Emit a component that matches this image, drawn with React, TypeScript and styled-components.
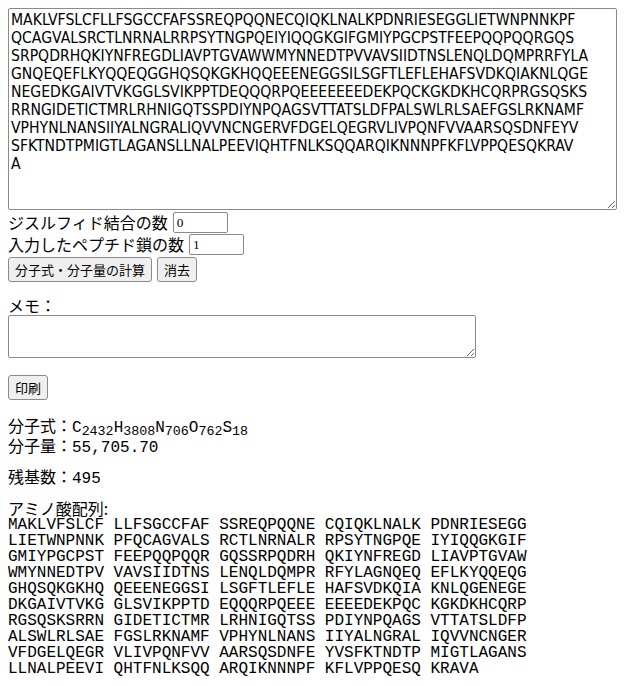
import styled, { createGlobalStyle } from "styled-components";

// textarea lines as shown in the screenshot
const SEQ_LINES = [
  "MAKLVFSLCFLLFSGCCFAFSSREQPQQNECQIQKLNALKPDNRIESEGGLIETWNPNNKPF",
  "QCAGVALSRCTLNRNALRRPSYTNGPQEIYIQQGKGIFGMIYPGCPSTFEEPQQPQQRGQS",
  "SRPQDRHQKIYNFREGDLIAVPTGVAWWMYNNEDTPVVAVSIIDTNSLENQLDQMPRRFYLA",
  "GNQEQEFLKYQQEQGGHQSQKGKHQQEEENEGGSILSGFTLEFLEHAFSVDKQIAKNLQGE",
  "NEGEDKGAIVTVKGGLSVIKPPTDEQQQRPQEEEEEEEDEKPQCKGKDKHCQRPRGSQSKS",
  "RRNGIDETICTMRLRHNIGQTSSPDIYNPQAGSVTTATSLDFPALSWLRLSAEFGSLRKNAMF",
  "VPHYNLNANSIIYALNGRALIQVVNCNGERVFDGELQEGRVLIVPQNFVVAARSQSDNFEYV",
  "SFKTNDTPMIGTLAGANSLLNALPEEVIQHTFNLKSQQARQIKNNNPFKFLVPPQESQKRAV",
  "A",
];

const SEQUENCE = SEQ_LINES.join("");

function formatListing(seq: string) {
  const blocks: string[] = [];
  for (let i = 0; i < seq.length; i += 10) blocks.push(seq.slice(i, i + 10));
  const rows: string[] = [];
  for (let i = 0; i < blocks.length; i += 5) rows.push(blocks.slice(i, i + 5).join(" "));
  return rows.join("\n");
}

const FORMULA: [string, string][] = [
  ["C", "2432"],
  ["H", "3808"],
  ["N", "706"],
  ["O", "762"],
  ["S", "18"],
];

export default function App() {
  return (
    <>
      <GlobalStyle />
      <Page>
        <SeqArea defaultValue={SEQ_LINES.join("\n")} spellCheck={false} />

        <FieldRow $top={2}>
          <Label>ジスルフィド結合の数</Label>
          <NumInput type="text" defaultValue="0" />
        </FieldRow>
        <FieldRow $top={1}>
          <Label>入力したペプチド鎖の数</Label>
          <NumInput type="text" defaultValue="1" />
        </FieldRow>

        <ButtonRow>
          <Button>分子式・分子量の計算</Button>
          <Button>消去</Button>
        </ButtonRow>

        <MemoLabel>メモ：</MemoLabel>
        <MemoArea />

        <ButtonRow $top={17}>
          <Button>印刷</Button>
        </ButtonRow>

        <Results>
          <ResultLine>
            分子式：
            <Mono>
              {FORMULA.map(([el, n]) => (
                <span key={el}>
                  {el}
                  <Sub>{n}</Sub>
                </span>
              ))}
            </Mono>
          </ResultLine>
          <ResultLine>
            分子量：<Mono>55,705.70</Mono>
          </ResultLine>
          <ResultLine $top={11}>
            残基数：<Mono>{SEQUENCE.length}</Mono>
          </ResultLine>
          <ResultLine $top={12}>アミノ酸配列:</ResultLine>
          <Listing>{formatListing(SEQUENCE)}</Listing>
        </Results>
      </Page>
    </>
  );
}

const GlobalStyle = createGlobalStyle`
  body {
    margin: 8px;
    background: #ffffff;
    color: #000000;
    font-family: "Noto Sans CJK JP", "Noto Sans", sans-serif;
    font-size: 16px;
  }
`;

const Page = styled.div`
  display: flex;
  flex-direction: column;
  align-items: flex-start;
`;

const SeqArea = styled.textarea`
  box-sizing: border-box;
  width: 609px;
  height: 202px;
  margin: 0;
  padding: 2px 2px;
  border: 1px solid #8a8a8a;
  border-radius: 2px;
  font-family: "DejaVu Sans Condensed", "Liberation Sans", sans-serif;
  font-size: 15.6px;
  line-height: 18px;
  color: #000;
  white-space: pre;
  overflow: hidden;
  resize: both;
`;

const FieldRow = styled.div<{ $top?: number }>`
  display: flex;
  align-items: center;
  gap: 5px;
  height: 21px;
  margin-top: ${(p) => p.$top ?? 0}px;
`;

const Label = styled.span`
  font-size: 16px;
  line-height: 21px;
  white-space: nowrap;
`;

const NumInput = styled.input`
  box-sizing: border-box;
  width: 55px;
  height: 21px;
  margin: 0;
  padding: 1px 3px;
  border: 1px solid #8a8a8a;
  border-radius: 2px;
  font-family: "Liberation Serif", serif;
  font-size: 13.33px;
  color: #000;
`;

const ButtonRow = styled.div<{ $top?: number }>`
  display: flex;
  gap: 5px;
  margin-top: ${(p) => p.$top ?? 2}px;
`;

const Button = styled.button`
  box-sizing: border-box;
  height: 25px;
  margin: 0;
  padding: 0 6px;
  border: 1px solid #8a8a8a;
  border-radius: 3px;
  background: #efefef;
  font-family: "Noto Sans CJK JP", sans-serif;
  font-size: 13px;
  line-height: 23px;
  color: #000;
`;

const MemoLabel = styled.div`
  margin-top: 14px;
  font-size: 16px;
  line-height: 19px;
`;

const MemoArea = styled.textarea`
  box-sizing: border-box;
  width: 468px;
  height: 43px;
  margin: 0;
  padding: 2px;
  border: 1px solid #8a8a8a;
  border-radius: 2px;
  resize: both;
`;

const Results = styled.div`
  display: flex;
  flex-direction: column;
  margin-top: 15px;
`;

const ResultLine = styled.div<{ $top?: number }>`
  height: 20px;
  font-size: 16px;
  line-height: 20px;
  white-space: nowrap;
  margin-top: ${(p) => p.$top ?? 0}px;
`;

const Mono = styled.span`
  font-family: "Liberation Mono", monospace;
  font-size: 16px;
  line-height: 20px;
`;

const Sub = styled.sub`
  font-size: 13.33px;
  line-height: 0;
  vertical-align: -3px;
`;

const Listing = styled.pre`
  margin: -1px 0 0;
  font-family: "Liberation Mono", monospace;
  font-size: 16px;
  line-height: 16px;
`;
